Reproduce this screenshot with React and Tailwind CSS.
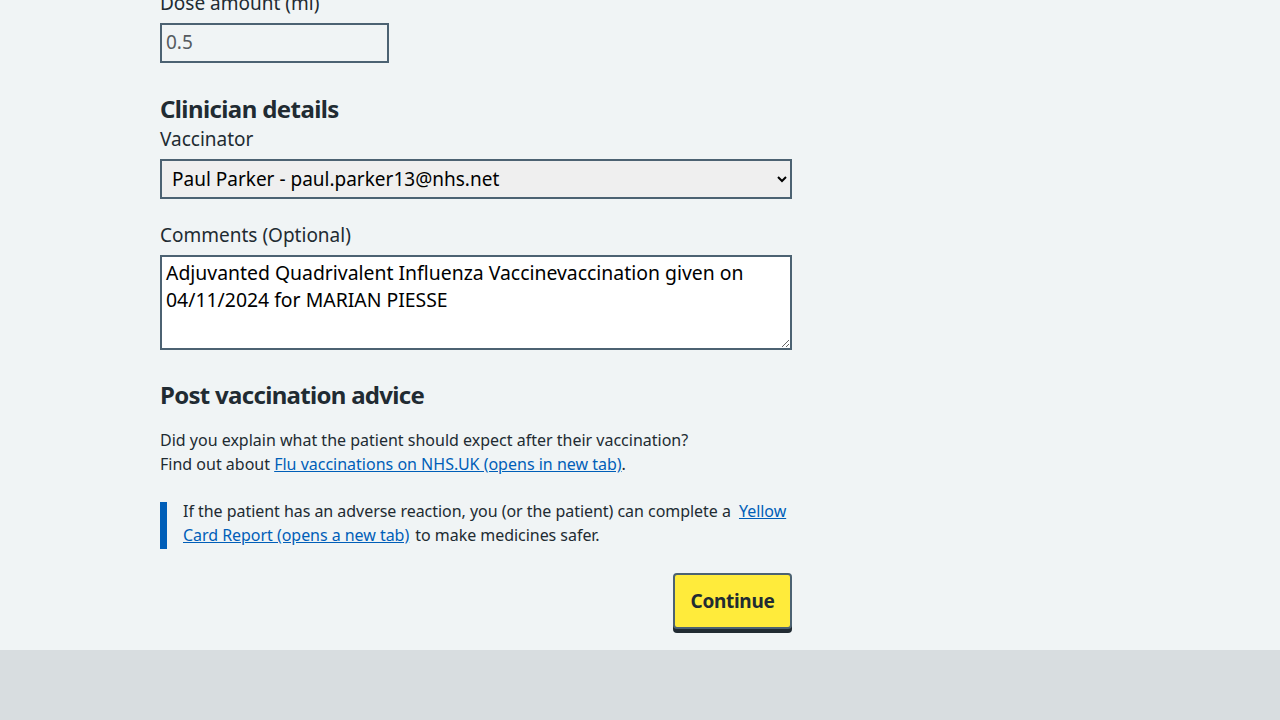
const FONT = { fontFamily: '"Noto Sans", Arial, sans-serif' };

export default function App() {
  return (
    <div className="min-h-[720px] flex flex-col bg-[#d8dde0] text-[#212b32]" style={FONT}>
      <main className="bg-[#f0f4f5] pb-[21px]">
        <div className="mx-auto w-[960px]">
          <div className="w-[632px] -mt-[11px]">
            <label className="block text-[19px] leading-[28px] mb-[6px]">Dose amount (ml)</label>
            <input
              readOnly
              value="0.5"
              className="block w-[229px] h-[40px] border-2 border-[#4c6272] bg-[#f0f4f5] px-1 pb-[2px] text-[19px] text-[#555b60] outline-none"
            />

            <h2 className="mt-[30px] text-[24px] leading-[32px] font-bold tracking-[-0.6px]">Clinician details</h2>
            <label className="block text-[19px] leading-[28px] mb-[6px]">Vaccinator</label>
            <select className="block w-full h-[40px] border-2 border-[#4c6272] bg-[#efefef] px-[6px] text-[19px] text-black">
              <option>Paul Parker - paul.parker13@nhs.net</option>
            </select>

            <label className="block mt-[22px] text-[19px] leading-[28px] mb-[6px]">Comments (Optional)</label>
            <textarea
              defaultValue="Adjuvanted Quadrivalent Influenza Vaccinevaccination given on 04/11/2024 for MARIAN PIESSE"
              className="block w-full h-[95px] border-2 border-[#4c6272] bg-white px-1 pt-[2px] text-[19.4px] leading-[27px] text-black"
            />

            <h2 className="mt-[29px] text-[24px] leading-[32px] font-bold tracking-[-0.7px]">Post vaccination advice</h2>
            <p className="mt-[17px] text-[16px] leading-[24px]">
              Did you explain what the patient should expect after their vaccination?
              <br />
              Find out about{" "}
              <a href="#" className="text-[#005eb8] underline">Flu vaccinations on NHS.UK (opens in new tab)</a>.
            </p>

            <div className="mt-[23px] flex items-start">
              <div className="mt-[3px] h-[47px] w-[7px] shrink-0 bg-[#005eb8]" />
              <p className="pl-4 text-[16px] leading-[24px] tracking-[-0.04px]">
                If the patient has an adverse reaction, you (or the patient) can complete a{" "}
                <a href="#" className="ml-1 mr-0.5 text-[#005eb8] underline">Yellow Card Report (opens a new tab)</a>{" "}
                to make medicines safer.
              </p>
            </div>

            <div className="mt-[24px] flex justify-end">
              <button className="h-[56px] w-[119px] rounded-[4px] border-2 border-[#4c6272] bg-[#ffeb3b] text-[19px] font-bold tracking-[-0.3px] text-[#212b32] shadow-[0_4px_0_#212b32]">
                Continue
              </button>
            </div>
          </div>
        </div>
      </main>
      <footer className="flex-1 bg-[#d8dde0]" />
    </div>
  );
}
